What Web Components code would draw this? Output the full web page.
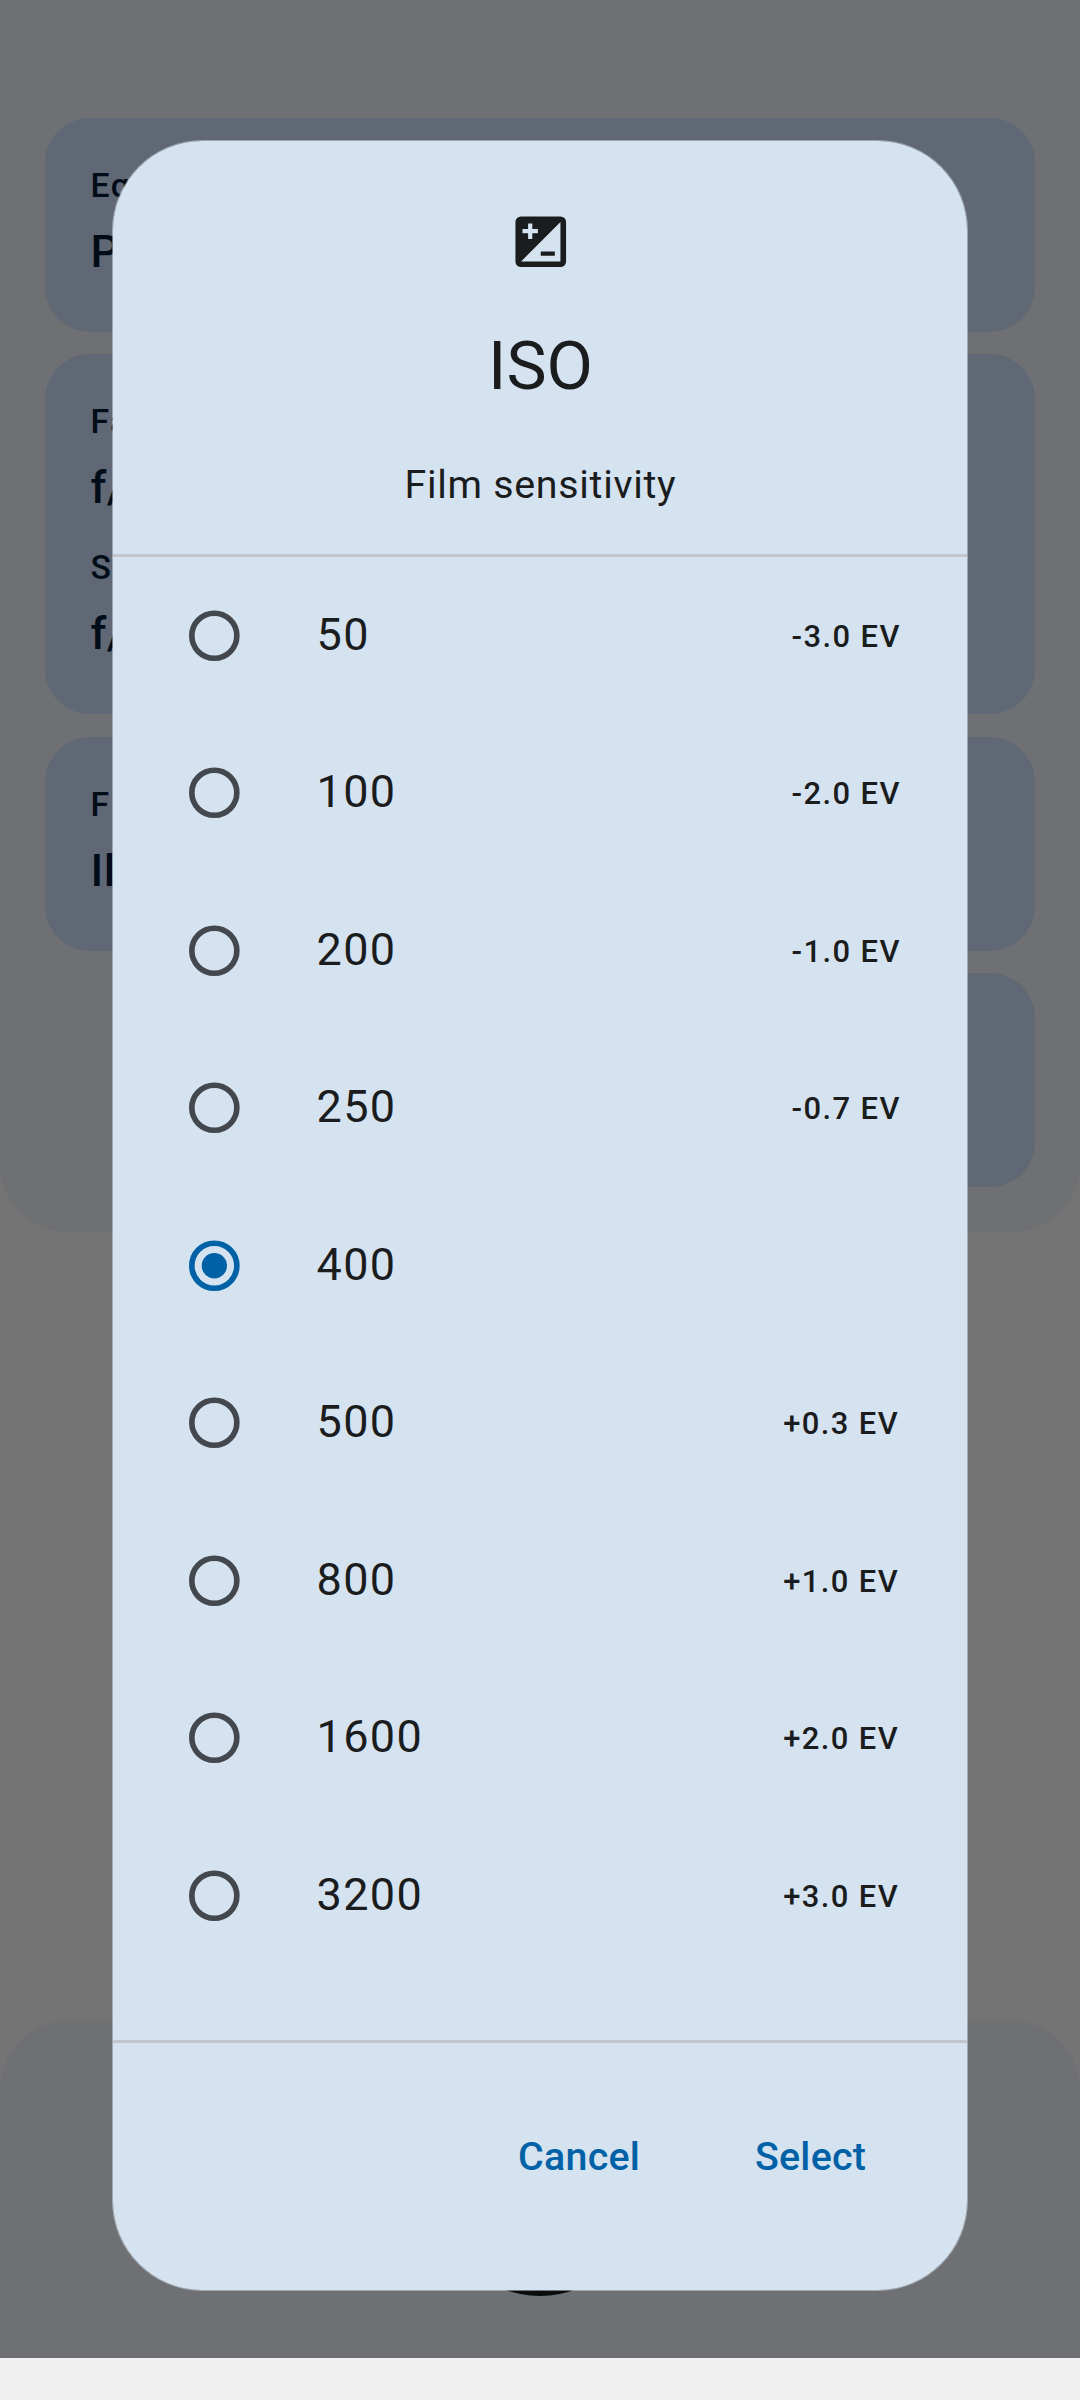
<!DOCTYPE html>
<html lang="en">
<head>
<meta charset="utf-8">
<title>ISO</title>
<style>
html,body{margin:0;padding:0}
body{width:1080px;height:2400px;overflow:hidden;background:#f0f0f0;font-family:Roboto,"Liberation Sans",sans-serif}
</style>
</head>
<body>
<film-screen>
  <info-panel slot="top">
    <info-card><info-entry label="Eq" value="P"></info-entry></info-card>
    <info-card><info-entry label="Fa" value="f/"></info-entry><info-entry label="S" value="f/"></info-entry></info-card>
    <info-card><info-entry label="F" value="Il"></info-entry></info-card>
    <info-card half></info-card>
  </info-panel>
  <measure-bar slot="bottom"></measure-bar>
  <picker-dialog slot="dialog" heading="ISO" sub="Film sensitivity">
    <iso-option value="50" ev="-3.0 EV"></iso-option>
    <iso-option value="100" ev="-2.0 EV"></iso-option>
    <iso-option value="200" ev="-1.0 EV"></iso-option>
    <iso-option value="250" ev="-0.7 EV"></iso-option>
    <iso-option value="400" selected></iso-option>
    <iso-option value="500" ev="+0.3 EV"></iso-option>
    <iso-option value="800" ev="+1.0 EV"></iso-option>
    <iso-option value="1600" ev="+2.0 EV"></iso-option>
    <iso-option value="3200" ev="+3.0 EV"></iso-option>
    <text-button slot="actions">Cancel</text-button>
    <text-button slot="actions">Select</text-button>
  </picker-dialog>
</film-screen>
<script>
const define = (name, render) => customElements.define(name, class extends HTMLElement {
  constructor() {
    super();
    this.attachShadow({ mode: "open" });
  }
  connectedCallback() {
    this.shadowRoot.innerHTML = render(this);
  }
});
const attr = (el, name) => el.getAttribute(name) || "";

define("film-screen", () => `
  <style>
    :host{display:flex;flex-direction:column;justify-content:space-between;position:relative;width:1080px;height:2358px;background:#747474;overflow:hidden}
    .overlay{position:absolute;inset:0;box-sizing:border-box;padding:140px 112px 67px;display:flex}
    ::slotted(picker-dialog){flex:1}
  </style>
  <slot name="top"></slot><slot name="bottom"></slot>
  <div class="overlay"><slot name="dialog"></slot></div>`);

define("info-panel", () => `
  <style>
    :host{display:flex;flex-direction:column;gap:22.5px;padding:118.125px 45px 45px;background:#6e7073;border-radius:0 0 67.5px 67.5px}
  </style><slot></slot>`);

define("info-card", () => `
  <style>
    :host{display:flex;flex-direction:column;gap:22.5px;box-sizing:border-box;min-height:213.75px;padding:45px;border-radius:45px;background:#616875;color:#000c18}
    :host([half]){width:483.75px;align-self:flex-end}
  </style><slot></slot>`);

define("info-entry", el => `
  <style>
    :host{display:flex;flex-direction:column;height:123.75px;font-weight:500;white-space:nowrap}
    :host(:not(:first-child)) .label{margin:-1px 0 1px}
    .label{font-size:33.75px;line-height:45px;letter-spacing:1.4px;padding-left:.6px}
    .value{font-size:45px;line-height:67.5px;letter-spacing:.42px;margin-top:9.75px;padding-left:.6px}
  </style>
  <div class="label">${attr(el, "label")}</div><div class="value">${attr(el, "value")}</div>`);

define("measure-bar", () => `
  <style>
    :host{display:flex;justify-content:center;align-items:flex-end;box-sizing:border-box;height:337.5px;padding-bottom:62px;background:#6e7073;border-radius:67.5px 67.5px 0 0}
    .button{width:202.5px;height:202.5px;border-radius:50%;background:#0b0c0e}
  </style><div class="button"></div>`);

define("picker-dialog", el => `
  <style>
    :host{display:flex;flex-direction:column;box-sizing:border-box;border:1px solid rgba(213,227,240,.5);background:#d5e3f0 padding-box;border-radius:90.5px;color:#1a1c1e;overflow:hidden}
    header{display:flex;flex-direction:column;align-items:center;gap:45px;padding:67px 0 40.8px 1px}
    svg{display:block;width:67.5px;height:67.5px}
    h1{margin:0;font-size:67.5px;line-height:90px;font-weight:400}
    p{margin:0;font-size:39.375px;line-height:56.25px;letter-spacing:.7px;padding-top:1.3px}
    .rule{height:3px;flex:none;background:#c3c6cc}
    main{flex:1;display:flex;flex-direction:column}
    footer{display:flex;justify-content:flex-end;gap:47.2px;padding:46.5px 67px 65.5px}
  </style>
  <header>
    <svg viewBox="0 0 24 24" fill="#1a1c1e"><path fill-rule="evenodd" d="M5 3H19A2 2 0 0 1 21 5V19A2 2 0 0 1 19 21H5A2 2 0 0 1 3 19V5A2 2 0 0 1 5 3ZM5.5 7.5V9H7.5V11H9V9H11V7.5H9V5.5H7.5V7.5ZM19 5L5 19H19ZM12 15.5H17V17H12Z"/></svg>
    <h1>${attr(el, "heading")}</h1>
    <p>${attr(el, "sub")}</p>
  </header>
  <div class="rule"></div>
  <main><slot></slot></main>
  <div class="rule"></div>
  <footer><slot name="actions"></slot></footer>`);

define("iso-option", el => {
  const on = el.hasAttribute("selected");
  const color = on ? "#0061a6" : "#43474e";
  return `
  <style>
    :host{display:flex;align-items:center;height:157.5px;padding:0 66.2px 0 67.6px}
    :host([ev^="+"]){padding-right:67.9px}
    svg{display:block;width:67.5px;height:67.5px;margin-right:68.4px}
    .value{flex:1;font-size:45px;line-height:67.5px;letter-spacing:1.4px;padding-bottom:2px}
    .ev{font-size:30.94px;line-height:45px;font-weight:500;letter-spacing:1.4px;padding-top:1.5px}
  </style>
  <svg viewBox="0 0 24 24"><g transform="translate(-.15 0)"><circle cx="12" cy="12" r="8" fill="none" stroke="${color}" stroke-width="2"/>${on ? `<circle cx="12" cy="12" r="4.5" fill="${color}"/>` : ""}</g></svg>
  <span class="value">${attr(el, "value")}</span>
  <span class="ev">${attr(el, "ev")}</span>`;
});

define("text-button", () => `
  <style>
    :host{display:flex;align-items:center;height:135px;padding:0 33.75px;color:#0061a6;font-size:39.375px;font-weight:500;line-height:56.25px;letter-spacing:.28px}
  </style><slot></slot>`);
</script>
</body>
</html>
